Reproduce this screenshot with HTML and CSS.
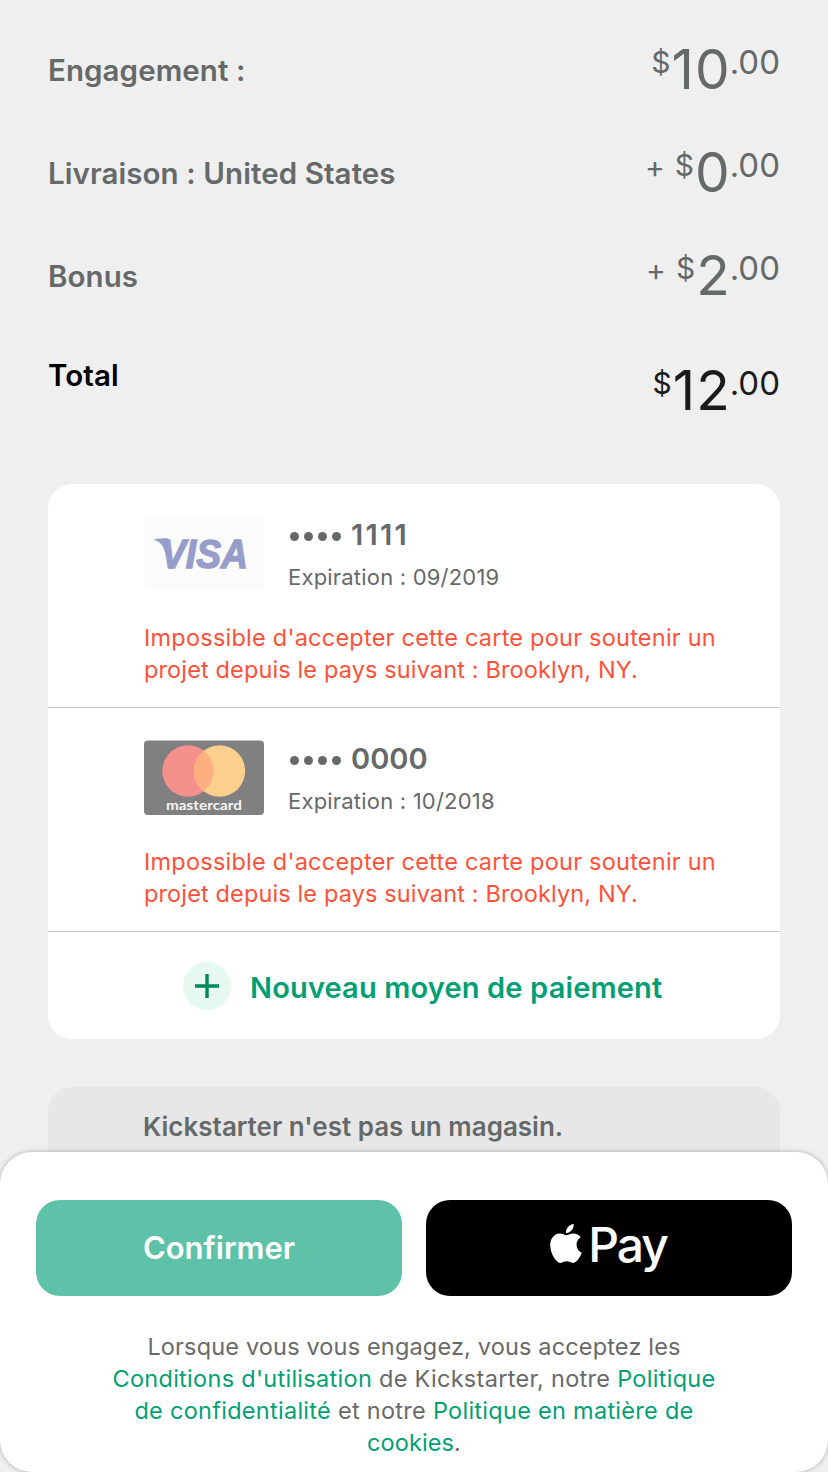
FILE: index.html
```html
<!DOCTYPE html>
<html lang="fr">
<head>
<meta charset="utf-8">
<title>Paiement</title>
<link rel="stylesheet" href="styles.css">
</head>
<body>
<main class="checkout">
  <section class="summary">
    <div class="line">
      <span class="label">Engagement :</span>
      <span class="price"><span class="cur">$</span><span class="whole whole-wide">10</span><span class="cents">.00</span></span>
    </div>
    <div class="line">
      <span class="label">Livraison : United States</span>
      <span class="price"><span class="op">+</span><span class="cur">$</span><span class="whole">0</span><span class="cents">.00</span></span>
    </div>
    <div class="line">
      <span class="label">Bonus</span>
      <span class="price price-bonus"><span class="op">+</span><span class="cur">$</span><span class="whole">2</span><span class="cents">.00</span></span>
    </div>
    <div class="line line-total">
      <span class="label label-total">Total</span>
      <span class="price"><span class="cur">$</span><span class="whole whole-wide">12</span><span class="cents">.00</span></span>
    </div>
  </section>

  <section class="methods">
    <article class="method">
      <div class="method-head">
        <svg class="brand visa" viewBox="0 0 120 73" width="120" height="73">
          <rect width="120" height="73" rx="4" fill="#fbfbfb"/>
          <path d="M10 22.4Q16 21.2 24 21.4L28 40H22Q20 25 10 22.9Z" fill="#979dcb"/>
          <text class="visa-text" x="17" y="51" textLength="87" lengthAdjust="spacingAndGlyphs">VISA</text>
        </svg>
        <div class="card-info">
          <div class="number"><span class="dots"><i></i><i></i><i></i><i></i></span><span class="digits digits-visa">1111</span></div>
          <div class="expiry">Expiration : 09/2019</div>
        </div>
      </div>
      <p class="error"><span class="error-a">Impossible d'accepter cette carte pour soutenir un</span><br><span class="error-b">projet depuis le pays suivant : Brooklyn, NY.</span></p>
    </article>
    <article class="method">
      <div class="method-head">
        <svg class="brand" viewBox="0 0 120 75" width="120" height="75">
          <rect y=".5" width="120" height="74.5" rx="4" fill="#808080"/>
          <circle cx="44" cy="31" r="25.7" fill="#f6908c"/>
          <circle cx="75.5" cy="31" r="25.7" fill="#fbcf8d"/>
          <path d="M59.75 10.7A25.7 25.7 0 0 1 59.75 51.3A25.7 25.7 0 0 1 59.75 10.7Z" fill="#ffae80"/>
          <text class="mc-text" x="22" y="70" textLength="76" lengthAdjust="spacingAndGlyphs">mastercard</text>
        </svg>
        <div class="card-info">
          <div class="number"><span class="dots"><i></i><i></i><i></i><i></i></span><span class="digits">0000</span></div>
          <div class="expiry">Expiration : 10/2018</div>
        </div>
      </div>
      <p class="error"><span class="error-a">Impossible d'accepter cette carte pour soutenir un</span><br><span class="error-b">projet depuis le pays suivant : Brooklyn, NY.</span></p>
    </article>
    <div class="add">
      <svg width="48" height="48" viewBox="0 0 48 48">
        <circle cx="24" cy="24" r="24" fill="#e5f9f0"/>
        <path d="M24 12V36M12 24H36" stroke="#028858" stroke-width="3.4"/>
      </svg>
      <span class="add-text">Nouveau moyen de paiement</span>
    </div>
  </section>

  <section class="notice"><span class="notice-text">Kickstarter n'est pas un magasin.</span></section>
</main>

<footer class="sheet">
  <div class="actions">
    <button class="btn confirm">Confirmer</button>
    <button class="btn apple" aria-label="Apple Pay">
      <svg width="32" height="39" viewBox="2.1 0 19.8 24.02" preserveAspectRatio="none">
        <path fill="#fff" d="M12.152 6.896c-.948 0-2.415-1.078-3.96-1.04-2.04.027-3.91 1.183-4.961 3.014-2.117 3.675-.546 9.103 1.519 12.09 1.013 1.454 2.208 3.09 3.792 3.039 1.52-.065 2.09-.987 3.935-.987 1.831 0 2.35.987 3.96.948 1.637-.026 2.676-1.48 3.676-2.948 1.156-1.688 1.636-3.325 1.662-3.415-.039-.013-3.182-1.221-3.22-4.857-.026-3.04 2.48-4.494 2.597-4.559-1.429-2.09-3.623-2.324-4.39-2.376-2-.156-3.675 1.09-4.61 1.09zM15.53 3.83c.843-1.012 1.4-2.427 1.245-3.83-1.207.052-2.662.805-3.532 1.818-.78.896-1.454 2.338-1.273 3.714 1.338.104 2.715-.688 3.559-1.701"/>
      </svg>
      <span class="pay">Pay</span>
    </button>
  </div>
  <p class="terms">
    <span class="t1">Lorsque vous vous engagez, vous acceptez les</span><br>
    <span class="t2"><a>Conditions d'utilisation</a> de Kickstarter, notre <a>Politique</a></span><br>
    <span class="t3"><a>de confidentialité</a> et notre <a>Politique en matière de</a></span><br>
    <span class="t4"><a>cookies</a>.</span>
  </p>
</footer>
</body>
</html>
```
FILE: styles.css
```css
* { box-sizing: border-box; }
body {
  margin: 0;
  width: 828px;
  height: 1472px;
  overflow: hidden;
  display: flex;
  flex-direction: column;
  background: #efefef;
  color: #656969;
  font-family: Inter, "Liberation Sans", sans-serif;
  font-feature-settings: "calt" 0;
}
p { margin: 0; }
svg { display: block; flex: none; }

.checkout { height: 1152px; flex: none; padding: 41px 48px 0; overflow: hidden; }

/* Order summary */
.line { display: flex; justify-content: space-between; align-items: flex-start; height: 103px; }
.line-total { height: 134px; color: #1b1b1b; }
.label { font-size: 29.5px; line-height: 30px; font-weight: 600; margin-top: 14px; letter-spacing: .08px; white-space: nowrap; }
.label-total { color: #000; margin-top: 10px; }
.price { display: flex; align-items: flex-start; line-height: 1; white-space: nowrap; }
.line-total .price { margin-top: 12px; }
.op { font-size: 30px; margin: 8px 10px 0 0; }
.cur { font-size: 30px; margin: 6px 0 0; }
.whole { font-size: 55px; margin: 1px 0 0 1px; }
.whole-wide { letter-spacing: 1px; margin-right: -1px; }
.cents { font-size: 33px; margin-top: 5px; }

/* Payment methods */
.methods { height: 555px; background: #fff; border-radius: 24px; overflow: hidden; }
.method { height: 224px; padding: 32px 0 0 96px; border-bottom: 1px solid #c7c7c7; }
.method-head { display: flex; height: 106px; }
.visa { margin-top: 1px; }
.visa-text { font: italic bold 41px "Liberation Sans", sans-serif; fill: #979dcb; stroke: #979dcb; stroke-width: 1.4px; }
.mc-text { font: 700 14px Lato, sans-serif; fill: #f5f5f5; }
.card-info { padding-left: 24px; }
.number { display: flex; align-items: center; height: 38px; }
.dots { display: flex; gap: 5px; padding: 3px 10px 0 2px; }
.dots i { width: 9px; height: 9px; border-radius: 50%; background: #656969; }
.digits { font-size: 29px; font-weight: 600; line-height: 38px; }
.digits-visa { letter-spacing: 2.2px; }
.expiry { font-size: 22px; line-height: 30px; margin-top: 8px; letter-spacing: .2px; white-space: nowrap; }
.error { font-size: 23.5px; line-height: 32px; color: #ff5139; white-space: nowrap; }
.error-a { letter-spacing: .23px; }
.error-b { letter-spacing: .13px; }
.add { display: flex; align-items: center; height: 107px; padding-left: 135px; gap: 19px; }
.add-text { font-size: 29px; font-weight: 600; line-height: 36px; letter-spacing: .15px; margin-top: 4px; color: #039f74; white-space: nowrap; }

.notice { margin-top: 48px; height: 90px; border-radius: 24px; background: #e7e7e7; padding: 23px 0 0 95px; }
.notice-text { display: block; font-size: 26px; line-height: 34px; font-weight: 600; white-space: nowrap; }

/* Bottom sheet */
.sheet {
  height: 320px;
  flex: none;
  padding: 48px 36px 0;
  background: #fff;
  border-radius: 32px;
  box-shadow: 0 0 5px rgba(0, 0, 0, .28);
}
.actions { display: grid; grid-template-columns: 1fr 1fr; gap: 24px; }
.btn { height: 96px; border: 0; padding: 0; border-radius: 24px; color: #fff; font-family: inherit; display: flex; align-items: center; justify-content: center; }
.confirm { background: #5ec2a8; font-size: 31px; font-weight: 600; padding-bottom: 2px; }
.apple { background: #000; gap: 6px; padding-right: 1px; }
.apple svg { margin-top: -9px; }
.pay { font-size: 48px; font-weight: 500; line-height: 58px; margin-top: -7px; letter-spacing: -2px; }
.terms { margin-top: 35px; font-size: 23.5px; line-height: 32px; text-align: center; white-space: nowrap; color: #696969; }
.terms a { color: #039f74; }
.t1 { letter-spacing: .16px; }
.t2 { letter-spacing: .29px; }
.t3 { letter-spacing: .28px; }
.t4 { letter-spacing: .1px; }
```
